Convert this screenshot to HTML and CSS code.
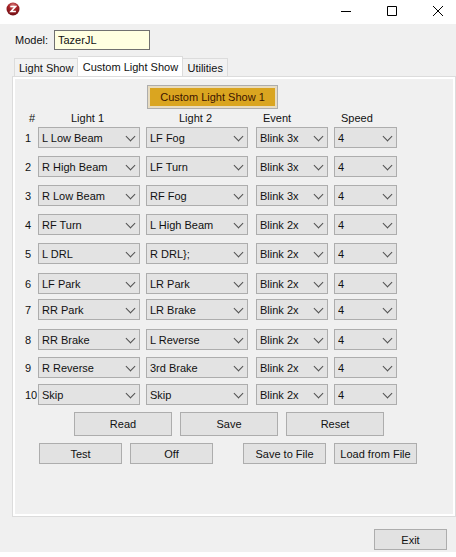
FILE: index.html
```html
<!DOCTYPE html>
<html lang="en">
<head>
<meta charset="utf-8">
<title>Custom Light Show</title>
<link rel="stylesheet" href="styles.css">
</head>
<body>
<header class="titlebar">
  <svg class="logo" viewBox="0 0 14 14" aria-hidden="true">
    <defs><radialGradient id="ball" cx="50%" cy="25%" r="75%"><stop offset="0" stop-color="#d98080"/><stop offset=".45" stop-color="#a52227"/><stop offset="1" stop-color="#6d0c12"/></radialGradient></defs>
    <circle cx="7" cy="7" r="6.5" fill="url(#ball)"/>
    <path d="M4.300 4.500H9.500L5 9.500H9.900" fill="none" stroke="#fff" stroke-width="1.600"/>
  </svg>
  <div class="controls">
    <button aria-label="Minimize"><svg viewBox="0 0 12 12"><path d="M1 6.500H11"/></svg></button>
    <button aria-label="Maximize"><svg viewBox="0 0 12 12"><path d="M1.500 1.500H10.500V10.500H1.500Z"/></svg></button>
    <button aria-label="Close"><svg viewBox="0 0 12 12"><path d="M1 1L11 11M11 1L1 11"/></svg></button>
  </div>
</header>
<main class="window">
  <div class="model">
    <label for="model">Model:</label>
    <input id="model" type="text" value="TazerJL">
  </div>
  <div class="tabs" role="tablist">
    <button class="tab" role="tab">Light Show</button>
    <button class="tab active" role="tab" aria-selected="true">Custom Light Show</button>
    <button class="tab" role="tab">Utilities</button>
  </div>
  <section class="panel">
    <button class="show">Custom Light Show 1</button>
    <div class="steps">
      <span class="head">#</span><span class="head light">Light 1</span><span class="head light">Light 2</span><span class="head">Event</span><span class="head">Speed</span>

      <span class="num">1</span>
      <div class="combo"><select aria-label="Step 1 light 1"><option>L Low Beam</option></select></div>
      <div class="combo"><select aria-label="Step 1 light 2"><option>LF Fog</option></select></div>
      <div class="combo"><select aria-label="Step 1 event"><option>Blink 3x</option></select></div>
      <div class="combo"><select aria-label="Step 1 speed"><option>4</option></select></div>

      <span class="num">2</span>
      <div class="combo"><select aria-label="Step 2 light 1"><option>R High Beam</option></select></div>
      <div class="combo"><select aria-label="Step 2 light 2"><option>LF Turn</option></select></div>
      <div class="combo"><select aria-label="Step 2 event"><option>Blink 3x</option></select></div>
      <div class="combo"><select aria-label="Step 2 speed"><option>4</option></select></div>

      <span class="num">3</span>
      <div class="combo"><select aria-label="Step 3 light 1"><option>R Low Beam</option></select></div>
      <div class="combo"><select aria-label="Step 3 light 2"><option>RF Fog</option></select></div>
      <div class="combo"><select aria-label="Step 3 event"><option>Blink 3x</option></select></div>
      <div class="combo"><select aria-label="Step 3 speed"><option>4</option></select></div>

      <span class="num">4</span>
      <div class="combo"><select aria-label="Step 4 light 1"><option>RF Turn</option></select></div>
      <div class="combo"><select aria-label="Step 4 light 2"><option>L High Beam</option></select></div>
      <div class="combo"><select aria-label="Step 4 event"><option>Blink 2x</option></select></div>
      <div class="combo"><select aria-label="Step 4 speed"><option>4</option></select></div>

      <span class="num">5</span>
      <div class="combo"><select aria-label="Step 5 light 1"><option>L DRL</option></select></div>
      <div class="combo"><select aria-label="Step 5 light 2"><option>R DRL};</option></select></div>
      <div class="combo"><select aria-label="Step 5 event"><option>Blink 2x</option></select></div>
      <div class="combo"><select aria-label="Step 5 speed"><option>4</option></select></div>

      <span class="num">6</span>
      <div class="combo"><select aria-label="Step 6 light 1"><option>LF Park</option></select></div>
      <div class="combo"><select aria-label="Step 6 light 2"><option>LR Park</option></select></div>
      <div class="combo"><select aria-label="Step 6 event"><option>Blink 2x</option></select></div>
      <div class="combo"><select aria-label="Step 6 speed"><option>4</option></select></div>

      <span class="num">7</span>
      <div class="combo"><select aria-label="Step 7 light 1"><option>RR Park</option></select></div>
      <div class="combo"><select aria-label="Step 7 light 2"><option>LR Brake</option></select></div>
      <div class="combo"><select aria-label="Step 7 event"><option>Blink 2x</option></select></div>
      <div class="combo"><select aria-label="Step 7 speed"><option>4</option></select></div>

      <span class="num">8</span>
      <div class="combo"><select aria-label="Step 8 light 1"><option>RR Brake</option></select></div>
      <div class="combo"><select aria-label="Step 8 light 2"><option>L Reverse</option></select></div>
      <div class="combo"><select aria-label="Step 8 event"><option>Blink 2x</option></select></div>
      <div class="combo"><select aria-label="Step 8 speed"><option>4</option></select></div>

      <span class="num">9</span>
      <div class="combo"><select aria-label="Step 9 light 1"><option>R Reverse</option></select></div>
      <div class="combo"><select aria-label="Step 9 light 2"><option>3rd Brake</option></select></div>
      <div class="combo"><select aria-label="Step 9 event"><option>Blink 2x</option></select></div>
      <div class="combo"><select aria-label="Step 9 speed"><option>4</option></select></div>

      <span class="num">10</span>
      <div class="combo"><select aria-label="Step 10 light 1"><option>Skip</option></select></div>
      <div class="combo"><select aria-label="Step 10 light 2"><option>Skip</option></select></div>
      <div class="combo"><select aria-label="Step 10 event"><option>Blink 2x</option></select></div>
      <div class="combo"><select aria-label="Step 10 speed"><option>4</option></select></div>
    </div>
    <div class="actions main-actions">
      <button class="btn">Read</button><button class="btn">Save</button><button class="btn">Reset</button>
    </div>
    <div class="actions file-actions">
      <button class="btn">Test</button><button class="btn">Off</button><button class="btn save-file">Save to File</button><button class="btn">Load from File</button>
    </div>
  </section>
  <footer class="footer"><button class="btn exit">Exit</button></footer>
</main>
</body>
</html>
```
FILE: styles.css
```css
* { box-sizing: border-box; }
body {
  margin: 0;
  background: #fff;
  color: #111;
  font: 11px/16px "Liberation Sans", Arial, sans-serif;
}
button, input, select { font: inherit; color: inherit; margin: 0; border-radius: 0; }
button { padding: 0; white-space: nowrap; }

.titlebar {
  display: flex;
  justify-content: space-between;
  height: 24px;
  padding: 2px 12px 2px 6px;
}
.logo { width: 14px; height: 14px; }
.controls { display: flex; gap: 34px; }
.controls button { width: 12px; height: 16px; border: 0; background: none; }
.controls svg { display: block; width: 12px; height: 12px; margin-top: 2px; fill: none; stroke: #000; }

.window { background: #f0f0f0; padding: 6px 0 2px 12px; }
.model { display: flex; align-items: center; padding-left: 3px; }
.model label { width: 39px; }
.model input {
  width: 96px;
  height: 20px;
  padding: 0 3px;
  border: 1px solid #707070;
  background: #ffffe1;
}

.tabs { display: flex; align-items: flex-end; margin-top: 6px; padding-left: 2px; }
.tab {
  min-width: 42px;
  height: 18px;
  padding: 1px 4px 0;
  border: 1px solid #dcdcdc;
  border-width: 1px 1px 0;
  background: #f2f2f2;
}
.tab:first-child { min-width: 64px; }
.tab + .tab { border-left: 0; }
.tab.active { min-width: 105px; height: 20px; padding: 0 4px; background: #fff; }

.panel {
  display: flex;
  flex-direction: column;
  border: 1px solid #dcdcdc;
  outline: 2px solid #fff;
  outline-offset: -3px;
  padding: 8px 10px 52px;
}
.show {
  align-self: flex-start;
  width: 131px;
  height: 24px;
  margin-left: 124px;
  border: 1px solid #adadad;
  background: #daa520;
  box-shadow: inset 0 0 0 2px #e8dcc0;
  color: #3c1400;
}

.steps {
  display: grid;
  grid-template-columns: 15px 108px 110px 78px 63px;
  grid-template-rows: 18px 29px 29px 29px 29px 30px 26px 30px 28px 27px 21px;
}
.head { padding: 1px 0 0 7px; }
.head:first-child { padding-left: 6px; }
.head.light { padding-left: 33px; }
.num { padding: 3px 0 0 2px; }
.combo { position: relative; height: 21px; margin-right: 6px; }
.combo:nth-child(5n + 3) { margin-right: 8px; }
.combo:nth-child(5n) { margin-right: 0; }
.combo select {
  display: block;
  appearance: none;
  width: 100%;
  height: 100%;
  padding: 0 18px 0 3px;
  border: 1px solid #adadad;
  background: #e3e3e3;
}
.combo::after {
  content: "";
  position: absolute;
  right: 6px;
  top: 6px;
  width: 6px;
  height: 6px;
  border: solid #505050;
  border-width: 0 1px 1px 0;
  transform: rotate(45deg);
  pointer-events: none;
}

.actions { display: flex; gap: 8px; }
.btn {
  width: 83px;
  height: 21px;
  border: 1px solid #adadad;
  background: #e2e2e2;
}
.main-actions { margin: 7px 0 0 51px; }
.main-actions .btn { width: 98px; height: 24px; }
.file-actions { margin: 7px 0 0 16px; }
.file-actions .save-file { margin-left: 22px; }
.footer { display: flex; justify-content: flex-end; padding: 12px 9px 0 0; }
.footer .exit { width: 73px; }
```
